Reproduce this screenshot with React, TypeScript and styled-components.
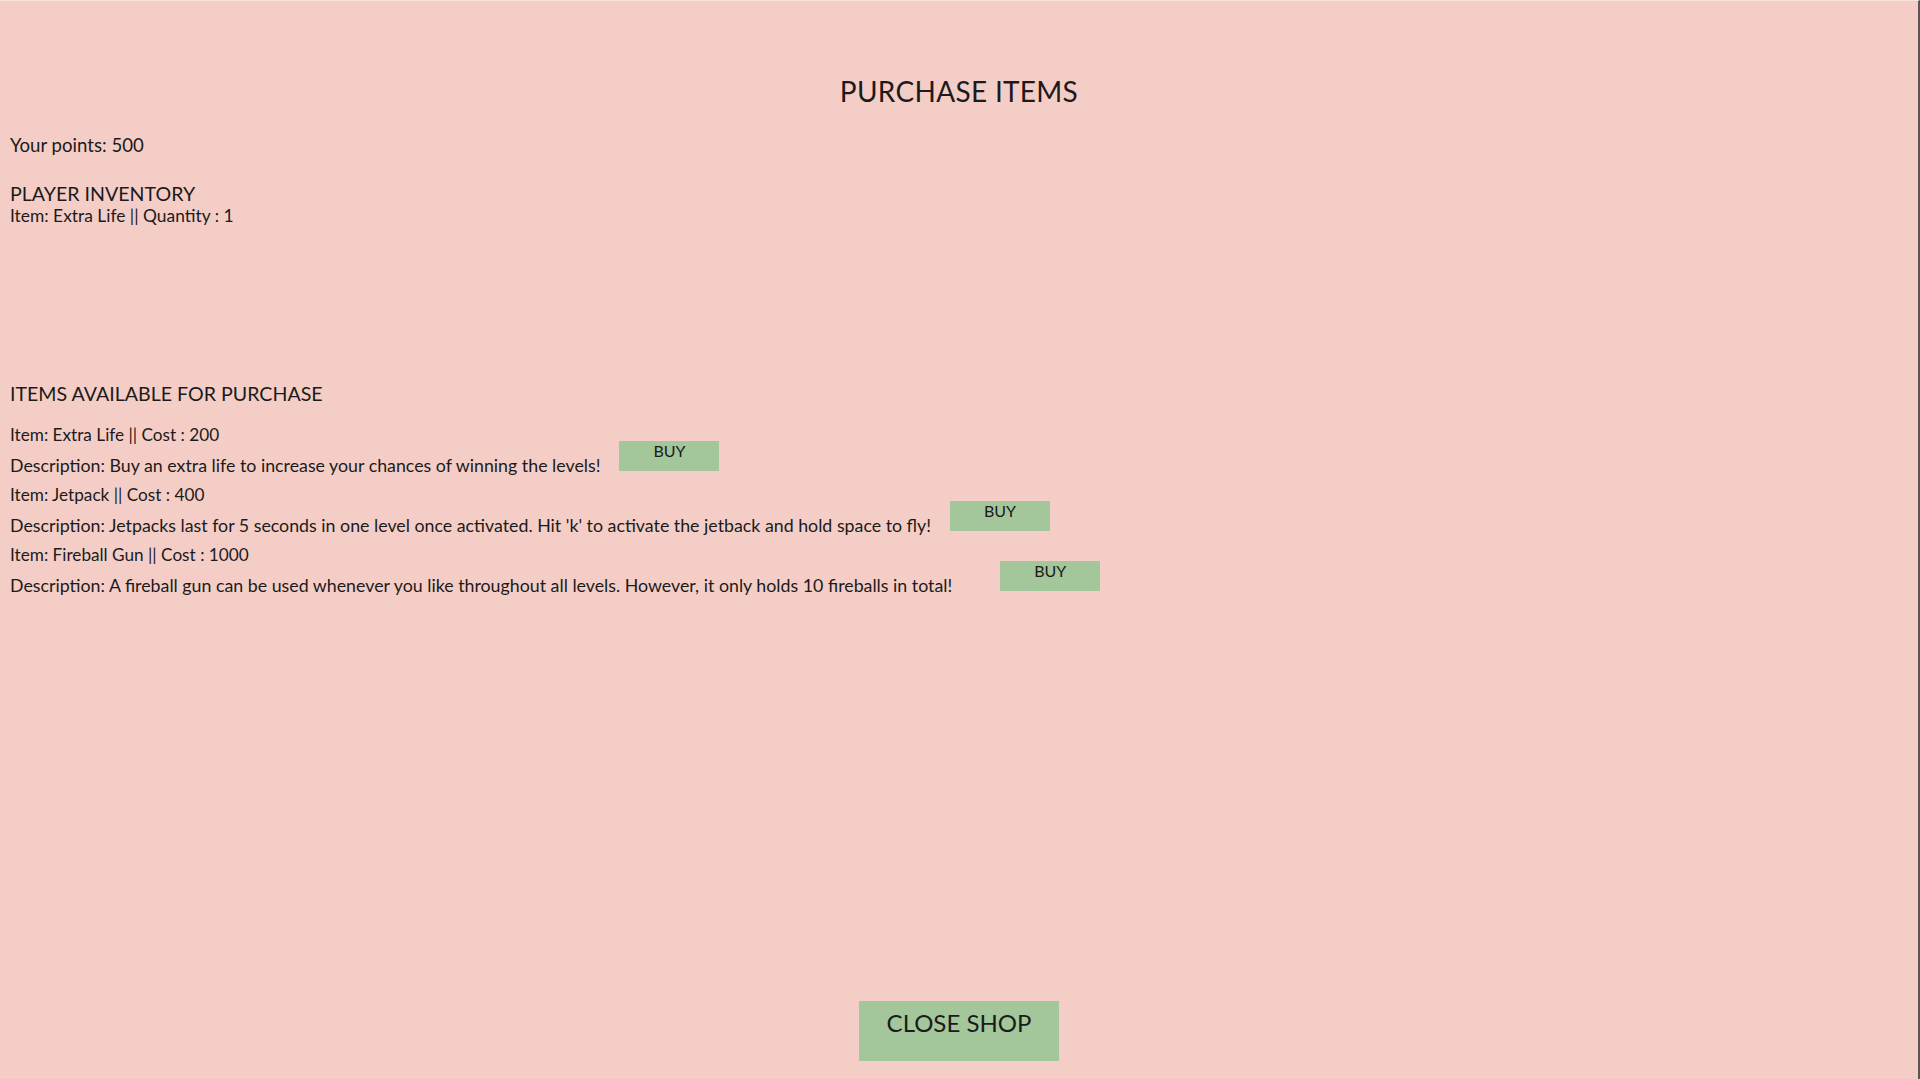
import React from "react";
import styled, { createGlobalStyle } from "styled-components";

const GlobalStyle = createGlobalStyle`
  html, body {
    margin: 0;
    padding: 0;
    background: #f4cec6;
  }
  body {
    font-family: Lato, "Noto Sans", sans-serif;
    color: #1c1a1a;
  }
  * { box-sizing: border-box; }
`;

const Page = styled.div`
  height: 1079px;
  display: flex;
  flex-direction: column;
  padding: 0 10px;
  border-top: 1px solid #f9e2dd;
  border-right: 2px solid #5d5553;
  background: #f4cec6;
  overflow: hidden;
`;

const Title = styled.h1`
  margin: 70px 0 0;
  font-size: 28px;
  line-height: 40px;
  font-weight: 400;
  text-align: center;
  letter-spacing: 0.3px;
`;

const Points = styled.p`
  margin: 22px 0 0;
  font-size: 18.6px;
  line-height: 24px;
`;

const SectionTitle = styled.h2<{ $gap: number }>`
  margin: ${(p) => p.$gap}px 0 0;
  font-size: 19.6px;
  line-height: 26px;
  font-weight: 400;
`;

const Line = styled.div<{ $size: number }>`
  font-size: ${(p) => p.$size}px;
  line-height: 30px;
  white-space: nowrap;
`;

const InventoryLine = styled(Line)`
  line-height: 16px;
  margin-top: 1px;
`;

const ItemList = styled.div`
  margin-top: 13px;
  display: flex;
  flex-direction: column;
`;

const ItemRow = styled.div`
  display: flex;
  align-items: flex-start;
`;

const ItemText = styled.div`
  display: flex;
  flex-direction: column;
`;

const BuyButton = styled.button<{ $gap: number }>`
  margin: 21px 0 0 ${(p) => p.$gap}px;
  width: 100px;
  height: 30px;
  padding: 2px 0 0;
  border: none;
  background: #a3c79b;
  color: #1c1a1a;
  font-family: Lato, "Noto Sans", sans-serif;
  font-size: 16px;
  line-height: 16px;
  display: flex;
  justify-content: center;
  align-items: flex-start;
  cursor: pointer;
`;

const Footer = styled.div`
  margin-top: auto;
  margin-bottom: 18px;
  display: flex;
  justify-content: center;
`;

const CloseButton = styled.button`
  width: 200px;
  height: 60px;
  padding: 8px 0 0;
  border: none;
  background: #a3c79b;
  color: #1c1a1a;
  font-family: Lato, "Noto Sans", sans-serif;
  font-size: 24px;
  line-height: 28px;
  display: flex;
  justify-content: center;
  align-items: flex-start;
  cursor: pointer;
`;

type ShopItem = { name: string; cost: number; description: string; gap: number };

const items: ShopItem[] = [
  {
    name: "Extra Life",
    cost: 200,
    description: "Buy an extra life to increase your chances of winning the levels!",
    gap: 19,
  },
  {
    name: "Jetpack",
    cost: 400,
    description:
      "Jetpacks last for 5 seconds in one level once activated. Hit 'k' to activate the jetback and hold space to fly!",
    gap: 19,
  },
  {
    name: "Fireball Gun",
    cost: 1000,
    description:
      "A fireball gun can be used whenever you like throughout all levels. However, it only holds 10 fireballs in total!",
    gap: 48,
  },
];

export default function App() {
  return (
    <>
      <GlobalStyle />
      <Page>
        <Title>PURCHASE ITEMS</Title>
        <Points>Your points: 500</Points>
        <SectionTitle $gap={24}>PLAYER INVENTORY</SectionTitle>
        <InventoryLine $size={17.4}>Item: Extra Life || Quantity : 1</InventoryLine>
        <SectionTitle $gap={157}>ITEMS AVAILABLE FOR PURCHASE</SectionTitle>
        <ItemList>
          {items.map((item) => (
            <ItemRow key={item.name}>
              <ItemText>
                <Line $size={17.2}>
                  Item: {item.name} || Cost : {item.cost}
                </Line>
                <Line $size={17.8}>Description: {item.description}</Line>
              </ItemText>
              <BuyButton $gap={item.gap}>BUY</BuyButton>
            </ItemRow>
          ))}
        </ItemList>
        <Footer>
          <CloseButton>CLOSE SHOP</CloseButton>
        </Footer>
      </Page>
    </>
  );
}
